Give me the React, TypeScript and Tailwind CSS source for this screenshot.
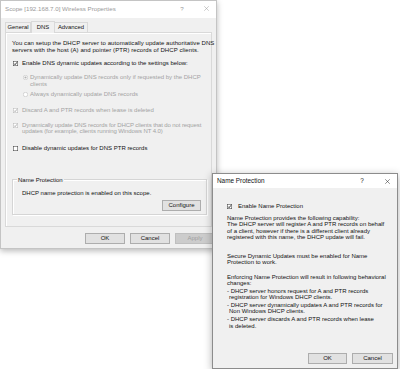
import React from "react";

const FONT = { fontFamily: '"Liberation Sans", Arial, sans-serif' };

function CheckBox({ disabled = false }: { disabled?: boolean }) {
  const c = disabled ? "#b4b4b4" : "#333333";
  const m = disabled ? "#a8a8a8" : "#222222";
  return (
    <svg width="5" height="5" viewBox="0 0 10 10" className="shrink-0">
      <rect x="0.5" y="0.5" width="9" height="9" fill="#ffffff" stroke={c} strokeWidth="1" />
      <path d="M2.2 5.2 L4.2 7.4 L7.9 2.6" fill="none" stroke={m} strokeWidth="1.8" />
    </svg>
  );
}

function EmptyBox() {
  return (
    <svg width="5" height="5" viewBox="0 0 10 10" className="shrink-0">
      <rect x="0.5" y="0.5" width="9" height="9" fill="#ffffff" stroke="#333333" strokeWidth="1" />
    </svg>
  );
}

function Radio({ selected = false }: { selected?: boolean }) {
  return (
    <svg width="5" height="5" viewBox="0 0 10 10" className="shrink-0">
      <circle cx="5" cy="5" r="4.4" fill="#ffffff" stroke="#b4b4b4" strokeWidth="1" />
      {selected && <circle cx="5" cy="5" r="2.2" fill="#b0b0b0" />}
    </svg>
  );
}

function CloseX({ color }: { color: string }) {
  return (
    <svg width="5" height="5" viewBox="0 0 10 10">
      <path d="M0.5 0.5 L9.5 9.5 M9.5 0.5 L0.5 9.5" stroke={color} strokeWidth="1" />
    </svg>
  );
}

function Lines({ lines, className = "" }: { lines: string[]; className?: string }) {
  return (
    <div className={className}>
      {lines.map((l, i) => (
        <div key={i} className="whitespace-nowrap leading-[6.5px] h-[6.5px]">
          {l}
        </div>
      ))}
    </div>
  );
}

function Btn({ label, disabled = false, w = "w-[40px]" }: { label: string; disabled?: boolean; w?: string }) {
  return (
    <div
      className={`${w} h-[11px] flex items-center justify-center border ${
        disabled ? "bg-[#cccccc] border-[#bfbfbf] text-[#a0a0a0]" : "bg-[#e1e1e1] border-[#adadad] text-[#111]"
      }`}
    >
      {label}
    </div>
  );
}

function MainDialog() {
  return (
    <div className="absolute left-0 top-0 w-[217px] h-[249px] bg-[#f0f0f0] border border-[#c4c4c4] shadow-[0_2px_6px_rgba(0,0,0,0.28)] flex flex-col text-[6px] text-[#111]">
      {/* title bar */}
      <div className="h-[17px] bg-white flex items-center pl-[4px] text-[6.2px] text-[#9a9a9a] shrink-0">
        <span className="flex-1 whitespace-nowrap -mt-[2px]">Scope [192.168.7.0] Wireless Properties</span>
        <span className="w-[20px] text-center mr-[4px] -mt-[2px]">?</span>
        <span className="w-[20px] flex justify-center -mt-[2px]">
          <CloseX color="#9a9a9a" />
        </span>
      </div>
      {/* body */}
      <div className="flex flex-col pl-[4px]">
        {/* tabs */}
        <div className="flex items-end h-[14px] relative z-10 text-[5.9px]">
          <div className="w-[26px] h-[10px] border border-b-0 border-[#d9d9d9] flex items-center justify-center">
            General
          </div>
          <div className="w-[24px] h-[12px] border border-b-0 border-[#d9d9d9] bg-[#f0f0f0] flex items-center justify-center -mb-[1px] pb-[1px]">
            DNS
          </div>
          <div className="w-[33px] h-[10px] border border-b-0 border-l-0 border-[#d9d9d9] flex items-center justify-center">
            Advanced
          </div>
        </div>
        {/* panel */}
        <div className="w-[207px] h-[195px] border border-[#d9d9d9] shadow-[inset_1px_1px_0_#ffffff] pl-[6px] flex flex-col">
          <Lines
            className="mt-[7px] tracking-[0.08px]"
            lines={[
              "You can setup the DHCP server to automatically update authoritative DNS",
              "servers with the host (A) and pointer (PTR) records of DHCP clients.",
            ]}
          />
          <div className="mt-[7px] flex items-center h-[6.5px] pl-[1px] gap-[4px]">
            <CheckBox />
            <span className="whitespace-nowrap leading-[6.5px]">Enable DNS dynamic updates according to the settings below:</span>
          </div>
          <div className="mt-[7.5px] flex items-start pl-[11px] gap-[2px] text-[#a3a3a3]">
            <div className="mt-[1px]">
              <Radio selected />
            </div>
            <Lines lines={["Dynamically update DNS records only if requested by the DHCP", "clients"]} />
          </div>
          <div className="mt-[4.25px] flex items-center h-[6.5px] pl-[11px] gap-[2px] text-[#a3a3a3]">
            <Radio />
            <span className="whitespace-nowrap leading-[6.5px]">Always dynamically update DNS records</span>
          </div>
          <div className="mt-[9px] flex items-center h-[6.5px] pl-[1px] gap-[4px] text-[#a3a3a3]">
            <CheckBox disabled />
            <span className="whitespace-nowrap leading-[6.5px]">Discard A and PTR records when lease is deleted</span>
          </div>
          <div className="mt-[8.5px] flex items-start pl-[1px] gap-[4px] text-[#a3a3a3]">
            <div className="mt-[1px]">
              <CheckBox disabled />
            </div>
            <Lines
              className="tracking-[-0.1px]"
              lines={[
                "Dynamically update DNS records for DHCP clients that do not request",
                "updates (for example, clients running Windows NT 4.0)",
              ]}
            />
          </div>
          <div className="mt-[10px] flex items-center h-[6.5px] pl-[1px] gap-[4px]">
            <EmptyBox />
            <span className="whitespace-nowrap leading-[6.5px]">Disable dynamic updates for DNS PTR records</span>
          </div>
          {/* group box */}
          <div className="mt-[27.75px] w-[195px] h-[36px] border border-[#d5d5d5] shadow-[inset_1px_1px_0_#ffffff,1px_1px_0_#ffffff] relative flex flex-col pl-[9px] pr-[5px]">
            <span className="absolute left-[4px] -top-[3.5px] bg-[#f0f0f0] px-[1px] leading-[6.5px] whitespace-nowrap">
              Name Protection
            </span>
            <div className="mt-[9.75px] leading-[6.5px] whitespace-nowrap">DHCP name protection is enabled on this scope.</div>
            <div className="mt-[3.75px] flex justify-end">
              <Btn label="Configure" w="w-[39px]" />
            </div>
          </div>
        </div>
        {/* bottom buttons */}
        <div className="mt-[6px] flex justify-end gap-[5px] pr-[1px]">
          <Btn label="OK" />
          <Btn label="Cancel" />
          <Btn label="Apply" disabled />
        </div>
      </div>
    </div>
  );
}

function NameProtectionDialog() {
  return (
    <div className="absolute left-[212px] top-[173px] w-[186px] h-[196px] bg-[#f0f0f0] border border-[#8c8c8c] shadow-[0_2px_8px_rgba(0,0,0,0.3)] flex flex-col text-[6px] text-[#111]">
      <div className="h-[14px] bg-white flex items-center pl-[4px] text-[6.4px] text-[#111] shrink-0">
        <span className="flex-1 whitespace-nowrap">Name Protection</span>
        <span className="w-[20px] text-center mr-[5px]">?</span>
        <span className="w-[20px] flex justify-center">
          <CloseX color="#222222" />
        </span>
      </div>
      <div className="flex flex-col pl-[14px] flex-1">
        <div className="mt-[14.75px] flex items-center h-[6.5px] gap-[6px]">
          <CheckBox />
          <span className="whitespace-nowrap leading-[6.5px]">Enable Name Protection</span>
        </div>
        <Lines
          className="mt-[5.5px]"
          lines={[
            "Name Protection provides the following capability:",
            "The DHCP server will register A and PTR records on behalf",
            "of a client, however if there is a different client already",
            "registered with this name, the DHCP update will fail.",
          ]}
        />
        <Lines
          className="mt-[12px]"
          lines={["Secure Dynamic Updates must be enabled for Name", "Protection to work."]}
        />
        <Lines
          className="mt-[8px]"
          lines={["Enforcing Name Protection will result in following behavioral", "changes:"]}
        />
        <div className="mt-[1px]">
          <div className="whitespace-nowrap leading-[6.5px] h-[6.5px]">- DHCP server honors request for A and PTR records</div>
          <div className="whitespace-nowrap leading-[6.5px] h-[6.5px] pl-[2px]">registration for Windows DHCP clients.</div>
        </div>
        <div className="mt-[1px]">
          <div className="whitespace-nowrap leading-[6.5px] h-[6.5px]">- DHCP server dynamically updates A and PTR records for</div>
          <div className="whitespace-nowrap leading-[6.5px] h-[6.5px] pl-[2px]">Non Windows DHCP clients.</div>
        </div>
        <div className="mt-[1.25px]">
          <div className="whitespace-nowrap leading-[6.5px] h-[6.5px]">- DHCP server discards A and PTR records when lease</div>
          <div className="whitespace-nowrap leading-[6.5px] h-[6.5px] pl-[2px]">is deleted.</div>
        </div>
        <div className="mt-auto mb-[4px] flex justify-end gap-[5px] pr-[4px]">
          <Btn label="OK" w="w-[39px]" />
          <Btn label="Cancel" w="w-[41px]" />
        </div>
      </div>
    </div>
  );
}

export default function App() {
  return (
    <div className="relative w-[400px] h-[369px] bg-white overflow-hidden" style={FONT}>
      <MainDialog />
      <NameProtectionDialog />
    </div>
  );
}
